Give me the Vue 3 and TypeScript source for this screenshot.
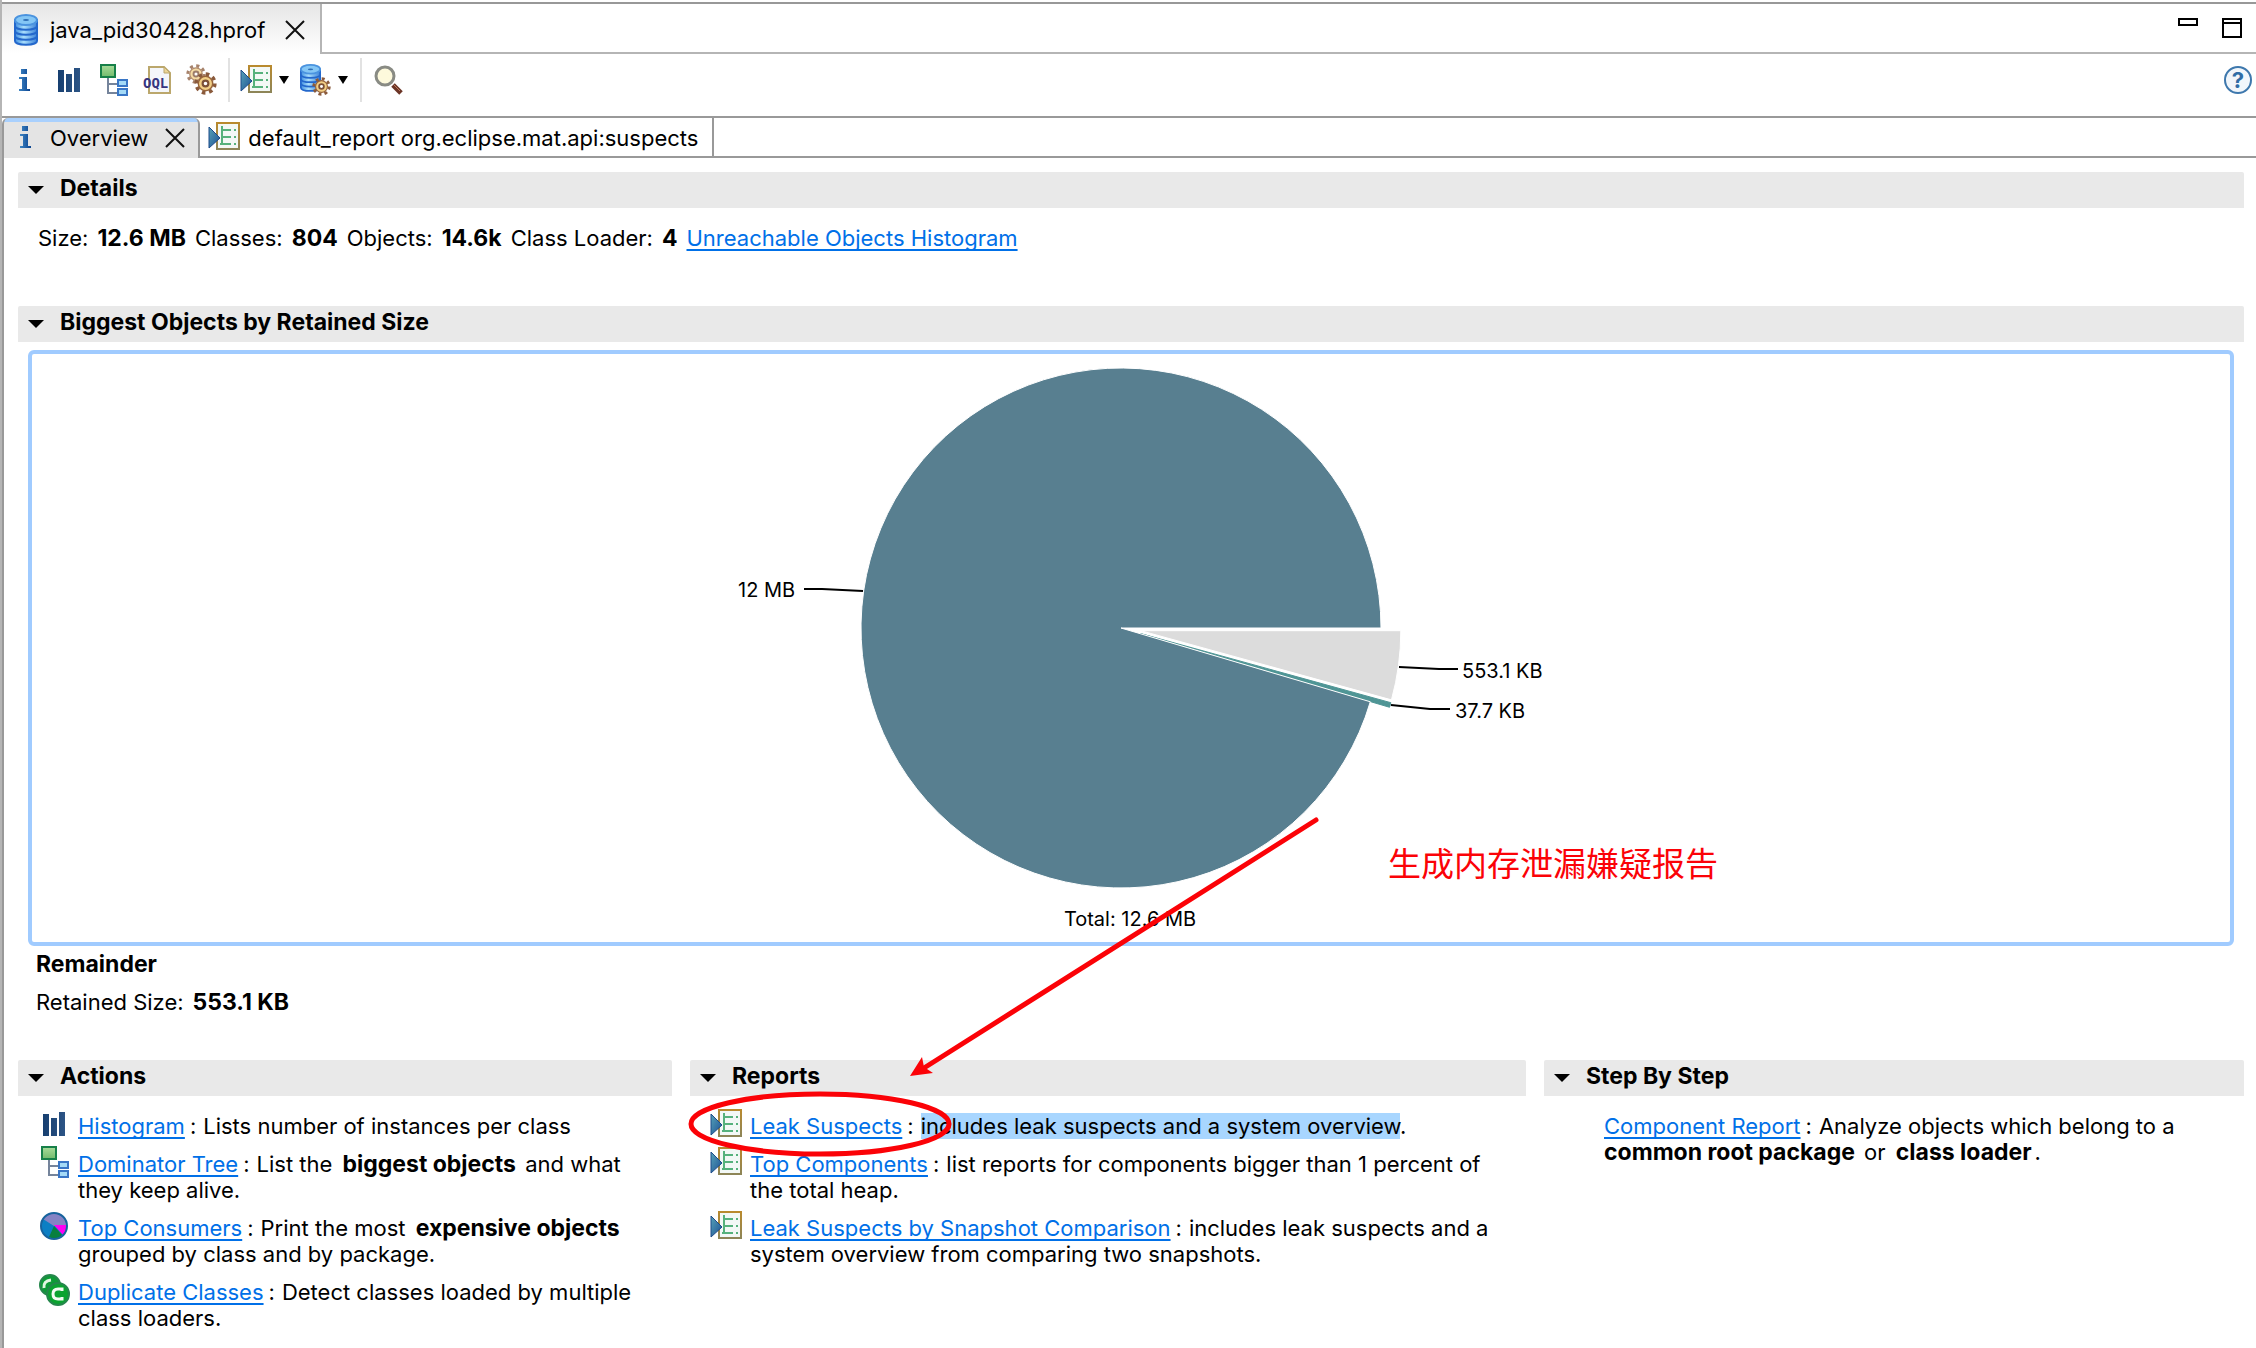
<script setup lang="ts">
import { computed } from 'vue'

interface Part {
  text: string
  kind?: 'bold' | 'selected'
}

interface Entry {
  icon?: string
  link: string
  parts: Part[]
}

interface Panel {
  title: string
  entries: Entry[]
}

const stats = [
  { label: 'Size:', value: '12.6 MB' },
  { label: 'Classes:', value: '804' },
  { label: 'Objects:', value: '14.6k' },
  { label: 'Class Loader:', value: '4' },
]

const panels: Panel[] = [
  {
    title: 'Actions',
    entries: [
      { icon: 'bars', link: 'Histogram', parts: [{ text: 'Lists number of instances per class' }] },
      {
        icon: 'tree',
        link: 'Dominator Tree',
        parts: [{ text: 'List the ' }, { text: 'biggest objects', kind: 'bold' }, { text: ' and what they keep alive.' }],
      },
      {
        icon: 'consumers',
        link: 'Top Consumers',
        parts: [{ text: 'Print the most ' }, { text: 'expensive objects', kind: 'bold' }, { text: ' grouped by class and by package.' }],
      },
      { icon: 'classes', link: 'Duplicate Classes', parts: [{ text: 'Detect classes loaded by multiple class loaders.' }] },
    ],
  },
  {
    title: 'Reports',
    entries: [
      {
        icon: 'report',
        link: 'Leak Suspects',
        parts: [{ text: 'includes leak suspects and a system overview', kind: 'selected' }, { text: '.' }],
      },
      { icon: 'report', link: 'Top Components', parts: [{ text: 'list reports for components bigger than 1 percent of the total heap.' }] },
      {
        icon: 'report',
        link: 'Leak Suspects by Snapshot Comparison',
        parts: [{ text: 'includes leak suspects and a system overview from comparing two snapshots.' }],
      },
    ],
  },
  {
    title: 'Step By Step',
    entries: [
      {
        link: 'Component Report',
        parts: [
          { text: 'Analyze objects which belong to a ' },
          { text: 'common root package', kind: 'bold' },
          { text: ' or ' },
          { text: 'class loader', kind: 'bold' },
          { text: '.' },
        ],
      },
    ],
  },
]

const center = { x: 420, y: 274 }
const radius = 260
const slices = [
  { kb: 553.1, color: '#dcdcdc', edge: '#fff', offset: 20 },
  { kb: 37.7, color: '#4f9595', edge: '#4f9595', offset: 20 },
  { kb: 12311.6, color: '#587f90', edge: '#fff', offset: 0 },
]

const wedges = computed(() => {
  const total = slices.reduce((sum, s) => sum + s.kb, 0)
  let from = 0
  return slices.map((s) => {
    const to = from + (s.kb / total) * Math.PI * 2
    const mid = (from + to) / 2
    const cx = center.x + Math.cos(mid) * s.offset
    const cy = center.y + Math.sin(mid) * s.offset
    const point = (a: number) => `${(cx + Math.cos(a) * radius).toFixed(2)} ${(cy + Math.sin(a) * radius).toFixed(2)}`
    const large = to - from > Math.PI ? 1 : 0
    const d = `M${cx.toFixed(2)} ${cy.toFixed(2)}L${point(from)}A${radius} ${radius} 0 ${large} 1 ${point(to)}Z`
    from = to
    return { d, color: s.color, edge: s.edge }
  })
})

const leaders = [
  { points: '103,235 121,235 162,237', x: 37, y: 243, label: '12 MB' },
  { points: '698,313 738,315 757,315', x: 761, y: 324, label: '553.1 KB' },
  { points: '690,351 729,355 749,355', x: 754, y: 364, label: '37.7 KB' },
]
</script>

<template>
  <div class="window">
    <svg class="defs" aria-hidden="true">
      <defs>
        <linearGradient id="g-db" x1="0" x2="1" y1="0" y2="0">
          <stop offset="0" stop-color="#3f8fe0" />
          <stop offset="0.4" stop-color="#a9defc" />
          <stop offset="1" stop-color="#3b82d8" />
        </linearGradient>
        <linearGradient id="g-info" x1="0" x2="1" y1="0" y2="0">
          <stop offset="0" stop-color="#3f86c4" />
          <stop offset="1" stop-color="#0a4390" />
        </linearGradient>
        <linearGradient id="g-bar" x1="0" x2="1" y1="0" y2="0">
          <stop offset="0" stop-color="#173f70" />
          <stop offset="1" stop-color="#2c5485" />
        </linearGradient>
        <linearGradient id="g-play" x1="0" x2="1" y1="0" y2="1">
          <stop offset="0" stop-color="#57a3b8" />
          <stop offset="1" stop-color="#1b4f93" />
        </linearGradient>
        <linearGradient id="g-sheet" x1="0" x2="0" y1="0" y2="1">
          <stop offset="0" stop-color="#b98a2e" />
          <stop offset="1" stop-color="#8d8558" />
        </linearGradient>
        <linearGradient id="g-green" x1="0" x2="0" y1="0" y2="1">
          <stop offset="0" stop-color="#a9dc9a" />
          <stop offset="1" stop-color="#72bb6c" />
        </linearGradient>
      </defs>
      <symbol id="i-db" viewBox="0 0 32 32">
        <g fill="url(#g-db)" stroke="#2468cc" stroke-width="2">
          <path d="M5 22v5c0 5 22 5 22 0v-5z" />
          <path d="M5 17v5c0 5 22 5 22 0v-5z" />
          <path d="M5 12v5c0 5 22 5 22 0v-5z" />
          <path d="M5 6v6c0 5 22 5 22 0V6z" />
          <ellipse cx="16" cy="6" rx="11" ry="5" fill="#84c6f5" stroke="#4a93df" />
        </g>
        <ellipse cx="16" cy="6" rx="3" ry="1" fill="#2f6fb5" />
      </symbol>
      <symbol id="i-info" viewBox="0 0 32 32">
        <path d="M12 5h6v5h-6zM10 13h8v12h3v2H10v-2h3V15h-3z" fill="url(#g-info)" />
      </symbol>
      <symbol id="i-bars" viewBox="0 0 32 32">
        <path d="M5 6h6v22H5zM13 10h6v18h-6zM21 4h6v24h-6z" fill="url(#g-bar)" />
      </symbol>
      <symbol id="i-tree" viewBox="0 0 32 32">
        <path d="M11 14v15h9M11 20h9" fill="none" stroke="#75849b" stroke-width="2" />
        <rect x="4" y="1" width="14" height="12" fill="url(#g-green)" stroke="#178049" stroke-width="2" />
        <rect x="21" y="16" width="9" height="6" fill="#a4daf7" stroke="#3976c6" stroke-width="2" />
        <rect x="21" y="25" width="9" height="6" fill="#a4daf7" stroke="#3976c6" stroke-width="2" />
      </symbol>
      <symbol id="i-gear" viewBox="0 0 32 32">
        <circle cx="16" cy="16" r="13" fill="none" stroke="#8a5a3c" stroke-width="5" stroke-dasharray="5 5.2" />
        <circle cx="16" cy="16" r="10" fill="#f2cf85" stroke="#97643b" stroke-width="2" />
        <circle cx="16" cy="16" r="4" fill="#fff" stroke="#7c5138" stroke-width="3" />
      </symbol>
      <symbol id="i-gears" viewBox="0 0 32 32">
        <use href="#i-gear" x="1" y="0" width="20" height="20" opacity="0.75" />
        <use href="#i-gear" x="9" y="8" width="23" height="23" />
      </symbol>
      <symbol id="i-report" viewBox="0 0 32 32">
        <rect x="9" y="2" width="22" height="26" fill="#f3f8f6" stroke="url(#g-sheet)" stroke-width="2" />
        <path d="M14 5v18M14 9h9M14 16h9M12 23h11M26 9h2M26 16h2M26 23h2" fill="none" stroke="#56b17c" stroke-width="2" />
        <path d="M1 6v21l11-10z" fill="url(#g-play)" stroke="#1d4a8a" />
      </symbol>
      <symbol id="i-dbgear" viewBox="0 0 32 32">
        <use href="#i-db" x="-3" y="0" width="29" height="28" />
        <use href="#i-gear" x="13" y="13" width="19" height="19" />
      </symbol>
      <symbol id="i-search" viewBox="0 0 32 32">
        <path d="M21 21l8 8" stroke="#6b3426" stroke-width="5" />
        <path d="M22 21l6 6" stroke="#bd7a5c" stroke-width="1" />
        <circle cx="13" cy="12" r="9" fill="#fdf9dc" stroke="#898b84" stroke-width="3" />
      </symbol>
      <symbol id="i-consumers" viewBox="0 0 32 32">
        <circle cx="16" cy="16" r="13" fill="#0b7fc4" />
        <path d="M16 16L5 9a13 13 0 0 1 24 6z" fill="#8583c4" />
        <path d="M16 15h13q0 6-4 10z" fill="#ff00f2" />
        <path d="M16 16l8 9q-6 6-13 2z" fill="#087f3e" />
        <circle cx="16" cy="16" r="13" fill="none" stroke="#17639d" stroke-width="2" />
      </symbol>
      <symbol id="i-classes" viewBox="0 0 32 32">
        <circle cx="12" cy="11" r="10" fill="#0d9b36" stroke="#25874c" stroke-width="2" />
        <path d="M6 14q-1-7 7-8" fill="none" stroke="#e2f5e2" stroke-width="3" />
        <circle cx="20" cy="20" r="11" fill="#0aa32f" stroke="#25874c" stroke-width="2" />
        <path d="M24 17v-2h-4q-5 0-5 5t5 5h4v-2" fill="none" stroke="#f3fbf2" stroke-width="3" />
      </symbol>
      <symbol id="i-close" viewBox="0 0 20 20">
        <path d="M1 1l18 18M19 1L1 19" stroke="#111" stroke-width="2" />
      </symbol>
      <symbol id="i-caret" viewBox="0 0 16 10">
        <path d="M0 1h16L8 9z" />
      </symbol>
      <symbol id="i-drop" viewBox="0 0 10 10">
        <path d="M0 1h10L5 9z" />
      </symbol>
    </svg>

    <header class="file-tabs">
      <div class="file-tab">
        <button class="tab-label"><svg class="icon"><use href="#i-db" /></svg>java_pid30428.hprof</button>
        <button class="close" aria-label="Close file"><svg><use href="#i-close" /></svg></button>
      </div>
      <div class="window-controls">
        <button aria-label="Minimize">
          <svg viewBox="0 0 20 20"><path d="M1 1h18v6H1z" fill="none" stroke="#000" stroke-width="2" /></svg>
        </button>
        <button aria-label="Maximize">
          <svg viewBox="0 0 20 20"><path d="M1 1h18v18H1zM1 5h18" fill="none" stroke="#000" stroke-width="2" /></svg>
        </button>
      </div>
    </header>

    <nav class="toolbar">
      <div class="tools">
        <button aria-label="Overview"><svg class="icon"><use href="#i-info" /></svg></button>
        <button aria-label="Histogram"><svg class="icon"><use href="#i-bars" /></svg></button>
        <button aria-label="Dominator tree"><svg class="icon"><use href="#i-tree" /></svg></button>
        <button aria-label="Query studio">
          <svg class="icon" viewBox="0 0 32 32">
            <path d="M8 3h15l6 6v20H8z" fill="#f4f6fa" stroke="#bba76c" stroke-width="2" />
            <path d="M23 3v6h6z" fill="#ecd596" stroke="#bba76c" />
            <text class="oql" x="2" y="24">OQL</text>
          </svg>
        </button>
        <button aria-label="Thread overview"><svg class="icon"><use href="#i-gears" /></svg></button>
      </div>
      <div class="tools menus">
        <button aria-label="Run report"><svg class="icon"><use href="#i-report" /></svg><svg class="drop"><use href="#i-drop" /></svg></button>
        <button aria-label="Query browser"><svg class="icon"><use href="#i-dbgear" /></svg><svg class="drop"><use href="#i-drop" /></svg></button>
      </div>
      <div class="tools last">
        <button aria-label="Find object"><svg class="icon"><use href="#i-search" /></svg></button>
      </div>
      <button class="help" aria-label="Help">?</button>
    </nav>

    <div class="view-tabs">
      <div class="view-tab active">
        <button class="tab-label"><svg class="icon"><use href="#i-info" /></svg>Overview</button>
        <button class="close" aria-label="Close overview"><svg><use href="#i-close" /></svg></button>
      </div>
      <div class="view-tab">
        <button class="tab-label"><svg class="icon"><use href="#i-report" /></svg>default_report org.eclipse.mat.api:suspects</button>
      </div>
    </div>

    <main class="content">
      <section class="details">
        <h2><button><svg class="twist"><use href="#i-caret" /></svg>Details</button></h2>
        <p class="stats">
          <template v-for="s in stats" :key="s.label"><span>{{ s.label }}</span><b>{{ s.value }}</b></template>
          <a href="#">Unreachable Objects Histogram</a>
        </p>
      </section>

      <section class="biggest">
        <h2><button><svg class="twist"><use href="#i-caret" /></svg>Biggest Objects by Retained Size</button></h2>
        <div class="chart">
          <svg viewBox="0 0 860 588" role="img" aria-label="Biggest objects">
            <path v-for="w in wedges" :key="w.color" :d="w.d" :fill="w.color" :stroke="w.edge" stroke-width="1" />
            <g v-for="l in leaders" :key="l.label">
              <polyline :points="l.points" fill="none" stroke="#000" stroke-width="2" />
              <text :x="l.x" :y="l.y">{{ l.label }}</text>
            </g>
            <text x="429" y="572" text-anchor="middle">Total: 12.6 MB</text>
          </svg>
        </div>
        <div class="selection">
          <b>Remainder</b>
          <p class="stats"><span>Retained Size:</span><b>553.1 KB</b></p>
        </div>
      </section>

      <div class="panels">
        <section v-for="p in panels" :key="p.title">
          <h2><button><svg class="twist"><use href="#i-caret" /></svg>{{ p.title }}</button></h2>
          <ul :class="{ plain: !p.entries[0].icon }">
            <li v-for="e in p.entries" :key="e.link">
              <svg v-if="e.icon" class="icon"><use :href="'#i-' + e.icon" /></svg>
              <p><a href="#">{{ e.link }}</a><span class="colon">:</span><span v-for="(t, i) in e.parts" :key="i" :class="t.kind">{{ t.text }}</span></p>
            </li>
          </ul>
        </section>
      </div>

      <svg class="marks" viewBox="0 0 1040 320" aria-label="Annotation">
        <g fill="none" stroke="#fb0207" stroke-width="5">
          <path d="M636 10L244 258" stroke-linecap="round" />
          <ellipse cx="140" cy="314" rx="129" ry="30" />
        </g>
        <path d="M230 266l12-19 2 10 9 6z" fill="#fb0207" />
        <text x="708" y="66">生成内存泄漏嫌疑报告</text>
      </svg>
    </main>
  </div>
</template>

<style>
body {
  margin: 0;
  background: #fff;
}
</style>

<style scoped>
.window {
  box-sizing: border-box;
  min-height: 100vh;
  padding-top: 2px;
  border-left: 2px solid #b5b5b5;
  background: #fff;
  color: #000;
  font: 22px/26px Inter, "Noto Sans CJK SC", sans-serif;
}
.defs {
  position: absolute;
  width: 0;
  height: 0;
}
button {
  display: flex;
  align-items: center;
  margin: 0;
  padding: 0;
  border: 0;
  background: none;
  color: inherit;
  font: inherit;
}
h2,
p,
ul {
  margin: 0;
  padding: 0;
}
b,
.bold {
  font-size: 23px;
  font-weight: 700;
}
a {
  color: #0070e8;
  text-decoration: underline;
  text-decoration-thickness: 2px;
  text-decoration-skip-ink: none;
  text-underline-offset: 3px;
}
.icon {
  flex: none;
  width: 32px;
  height: 32px;
}
.oql {
  fill: #37357f;
  font: 700 14px "DejaVu Sans Mono", monospace;
}
.close svg {
  width: 20px;
  height: 20px;
}
.file-tabs {
  display: flex;
  border-top: 2px solid #989898;
}
.file-tab {
  display: flex;
  align-items: center;
  gap: 20px;
  box-sizing: border-box;
  height: 50px;
  padding: 2px 15px 0 8px;
  border-right: 2px solid #b5b5b5;
  background: linear-gradient(#e6e6e6, #fff);
}
.file-tab .tab-label {
  gap: 8px;
}
.window-controls {
  display: flex;
  flex: 1;
  align-items: flex-start;
  justify-content: flex-end;
  gap: 24px;
  box-sizing: border-box;
  height: 50px;
  padding: 14px 14px 0 0;
  border-bottom: 2px solid #b5b5b5;
}
.window-controls svg {
  width: 20px;
  height: 20px;
}
.toolbar {
  display: flex;
  align-items: center;
  box-sizing: border-box;
  height: 62px;
  padding: 0 4px 10px 7px;
}
.tools {
  display: flex;
  align-items: center;
  gap: 12px;
  height: 44px;
  padding-right: 11px;
  border-right: 2px solid #e2e2e2;
}
.menus {
  gap: 10px;
  padding: 0 12px 0 10px;
}
.menus button {
  gap: 7px;
}
.drop {
  width: 10px;
  height: 10px;
}
.last {
  padding-left: 10px;
  border: 0;
}
.help {
  justify-content: center;
  box-sizing: border-box;
  width: 28px;
  height: 28px;
  margin-left: auto;
  border: 2px solid #3e78ad;
  border-radius: 50%;
  background: #f1f6fb;
  color: #2f6ca5;
  font-weight: 700;
}
.view-tabs {
  display: flex;
  height: 38px;
  border-top: 2px solid #999;
  border-bottom: 2px solid #999;
}
.view-tab {
  display: flex;
  align-items: center;
  padding: 2px 14px 0 8px;
  border-right: 2px solid #999;
}
.view-tab .tab-label {
  gap: 8px;
}
.view-tab .icon {
  margin: -2px 0 0;
}
.active {
  gap: 17px;
  box-sizing: border-box;
  height: 40px;
  padding: 0 13px 0 6px;
  border-left: 2px solid #999;
  border-radius: 6px 6px 0 0;
  background: linear-gradient(#a9d0fd 4px, #e4e4e4 4px);
}
.content {
  position: relative;
  padding: 14px 12px 18px 14px;
  border-left: 2px solid #999;
}
h2 {
  border-radius: 2px 2px 0 0;
  background: #e9e9e9;
  font-size: 23px;
  font-weight: 700;
}
h2 button {
  gap: 16px;
  width: 100%;
  height: 36px;
  padding: 0 10px 4px;
}
.twist {
  width: 16px;
  height: 10px;
  margin-top: 4px;
}
.stats {
  display: flex;
  flex-wrap: wrap;
  column-gap: 9px;
}
.details .stats {
  padding: 17px 20px 55px;
}
.chart {
  display: flex;
  justify-content: center;
  margin: 8px 10px 0;
  border: 4px solid #a0cbff;
  border-radius: 6px;
}
.chart svg {
  width: 860px;
  height: 588px;
}
.chart text {
  font-size: 20px;
}
.selection {
  display: flex;
  flex-direction: column;
  gap: 12px;
  padding: 5px 18px 45px;
}
.panels {
  display: grid;
  grid-template-columns: 654fr 836fr 700fr;
  gap: 18px;
}
.panels ul {
  display: flex;
  flex-direction: column;
  gap: 12px;
  padding: 17px 26px 0 20px;
  list-style: none;
}
.panels .plain {
  padding-left: 60px;
}
li {
  display: flex;
  align-items: flex-start;
  gap: 8px;
}
li .icon {
  margin: -5px 0;
}
.colon {
  margin: 0 7px 0 5px;
}
.panels span:has(+ .bold) {
  margin-right: 4px;
}
.panels .bold {
  margin-right: 3px;
}
.selected {
  background: #a8d6ff;
}
.marks {
  position: absolute;
  top: 652px;
  left: 676px;
  width: 1040px;
  height: 320px;
  overflow: visible;
  pointer-events: none;
}
.marks text {
  fill: #fb0207;
  font: 33px "Noto Sans CJK SC", sans-serif;
}
</style>
